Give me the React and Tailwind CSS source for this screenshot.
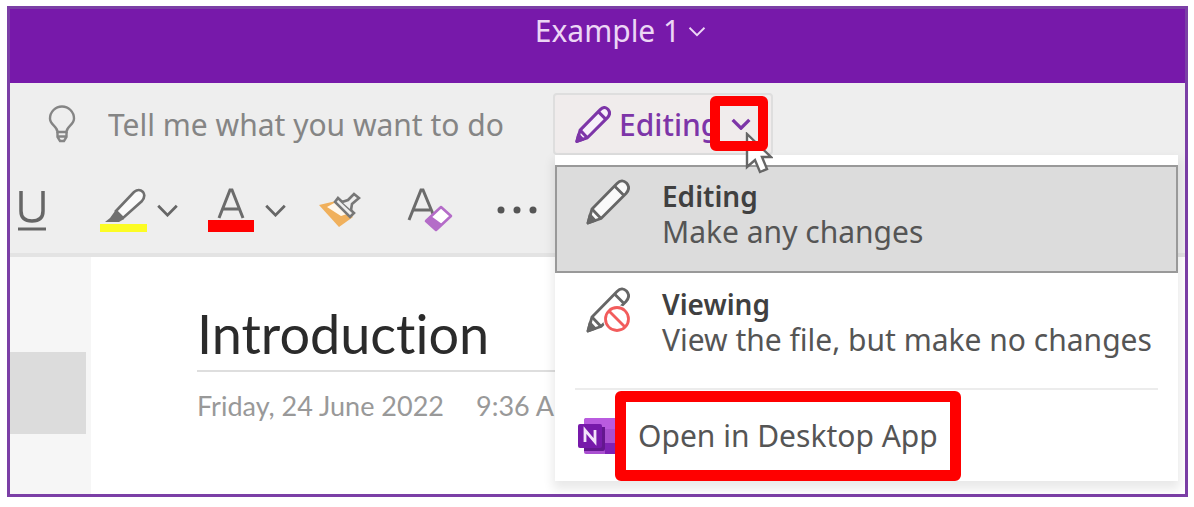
import React from 'react';

function Chevron({ className, strokeWidth = 3 }) {
  return (
    <svg viewBox="0 0 24 14" className={className} fill="none" stroke="currentColor" strokeWidth={strokeWidth} aria-hidden="true">
      <path d="M2 2l10 10L22 2" />
    </svg>
  );
}

function Pencil({ className, fill = 'none', strokeWidth = 2.8, children }) {
  return (
    <svg viewBox="0 0 44 46" className={className} fill="none" stroke="currentColor" strokeWidth={strokeWidth} strokeLinejoin="round" aria-hidden="true">
      <path d="M2 44L6 30L31 4.500Q36 -.5 40.500 4Q45 9 40 14.500L15 39.500Z" fill={fill} />
      <path d="M28.500 7L37.500 16M6 30L15 39.500" />
      <path d="M2 44L4 36L9 41.500Z" fill="currentColor" />
      {children}
    </svg>
  );
}

function Bulb() {
  return (
    <svg viewBox="0 0 28 38" className="h-[38px] w-7 shrink-0 text-[#858585]" fill="none" stroke="currentColor" strokeWidth="2.400" role="img" aria-label="Tell me">
      <path d="M9.500 27C9.500 21 2 20 2 13.500A12 12 0 0 1 26 13.500C26 20 18.500 21 18.500 27Z" />
      <path d="M9.500 27V32L12 36H16L18.500 32V27M9.500 31.500H18.500" />
    </svg>
  );
}

function Highlighter() {
  return (
    <svg viewBox="0 0 48 46" className="h-[46px] w-12" fill="none" aria-hidden="true">
      <path d="M16 24L34 5Q39 1 43 5Q46 9 42 14L23 31Z" fill="#fafafa" stroke="#707070" strokeWidth="2.600" />
      <path d="M5 35L10 31L15 24L24 32L19 35Z" fill="#707070" />
      <rect x="0" y="37" width="47" height="8" fill="#fcfc24" />
    </svg>
  );
}

function FontColor() {
  return (
    <svg viewBox="0 0 46 46" className="h-[46px] w-[46px]" fill="none" aria-hidden="true">
      <path d="M11 31L22 3H24L35 31M15 22H31" stroke="#6b6b6b" strokeWidth="3" />
      <rect x="0" y="33" width="46" height="12" fill="#ff0000" />
    </svg>
  );
}

function FormatPainter() {
  return (
    <svg viewBox="0 0 42 36" className="h-9 w-[42px]" fill="none" aria-hidden="true">
      <path d="M0 13L17 9L34 25L20 35Z" fill="#f0b05c" />
      <path d="M8 15L17 10L28 22L22 24Z" fill="#fff7ec" />
      <path d="M19 6L35 21L31 25L16 10Z" fill="#eeeeee" stroke="#777" strokeWidth="2.600" />
      <path d="M23 10L29 8L35 2L40 6L33 12L32 18" fill="#eeeeee" stroke="#777" strokeWidth="2.600" />
    </svg>
  );
}

function ClearFormat() {
  return (
    <svg viewBox="0 0 46 46" className="h-[46px] w-[46px]" fill="none" aria-hidden="true">
      <path d="M2 33L14 3H16L26 27M7 23H23" stroke="#6b6b6b" strokeWidth="3" />
      <path d="M19 34L34 20L44 29L29 43Z" fill="#fff" stroke="#b46cc8" strokeWidth="2.600" strokeLinejoin="round" />
      <path d="M19 34L24 29L35 37L29 43Z" fill="#b46cc8" />
    </svg>
  );
}

function OneNoteLogo() {
  return (
    <svg viewBox="0 0 46 40" className="h-10 w-[46px] shrink-0" aria-hidden="true">
      <rect x="7" y="2" width="36" height="36" rx="2" fill="#a94fd0" />
      <path d="M9 2H43V13H7V4Z" fill="#b95bdf" />
      <path d="M28 27H43V38H28Z" fill="#7f22b4" />
      <path d="M24 11H28V33Q28 35 26 35H7V31H24Z" fill="#64178f" />
      <rect x="1" y="8" width="24" height="24" rx="2" fill="#7719aa" />
      <path d="M8 26V14L18 26V14" fill="none" stroke="#f3e3fa" strokeWidth="2.800" />
    </svg>
  );
}

function Cursor() {
  return (
    <svg viewBox="0 0 28 42" className="pointer-events-none absolute top-[39px] left-[192px] z-20 h-[42px] w-7" aria-hidden="true">
      <path d="M2 2V35L10 28L15 40L22 37L17 25H26Z" fill="#fff" stroke="#666" strokeWidth="2.400" />
    </svg>
  );
}

function ModeItem({ title, detail, selected, icon }) {
  return (
    <button
      type="button"
      role="menuitem"
      className={
        selected
          ? 'flex h-[108px] w-full items-start border-2 border-[#999] bg-[#dcdcdc] pt-3 pl-[29px] text-left'
          : 'flex h-[108px] w-full items-start border-2 border-transparent pt-3 pl-[29px] text-left'
      }
    >
      {icon}
      <span className="ml-8 flex flex-col text-[30px] leading-[35px] whitespace-nowrap text-[#555]">
        <span className="text-[28px] font-semibold text-[#404040]">{title}</span>
        <span>{detail}</span>
      </span>
    </button>
  );
}

function ModeMenu() {
  return (
    <div role="menu" className="absolute top-full left-0.5 z-10 w-[623px] bg-white pt-2.5 shadow-[0_6px_10px_2px_rgba(0,0,0,0.09)]">
      <ModeItem
        selected
        title="Editing"
        detail="Make any changes"
        icon={<Pencil className="h-[46px] w-11 shrink-0 text-[#666]" fill="#fafafa" />}
      />
      <ModeItem
        title="Viewing"
        detail="View the file, but make no changes"
        icon={
          <Pencil className="h-[46px] w-11 shrink-0 text-[#666]" fill="#fff">
            <circle cx="31" cy="32" r="14" fill="#fff" stroke="none" />
            <circle cx="31" cy="32" r="11.500" fill="#fff" stroke="#f25c5c" strokeWidth="2.800" />
            <path d="M23 24L39 40" stroke="#f25c5c" strokeWidth="2.800" />
          </Pencil>
        }
      />
      <hr className="mx-5 mt-[7px] border-t-2 border-[#ececec]" />
      <button type="button" role="menuitem" className="flex h-[91px] items-center pl-[22px]">
        <OneNoteLogo />
        <span className="z-10 -ml-2 flex h-[90px] items-center rounded-md border-[11px] border-[#ff0000] bg-white px-3 text-[30px] whitespace-nowrap text-[#555]">
          Open in Desktop App
        </span>
      </button>
    </div>
  );
}

export default function App() {
  return (
    <div className="bg-white pt-1.5 pr-1.5 pb-[11px] pl-[7px] font-['Noto_Sans','Open_Sans',sans-serif]">
      <div className="border-[3px] border-[#7b3fa6]">
        <header className="flex h-[74px] items-start justify-center bg-[#7719aa] pt-1 pl-[46px] text-[#ecd6f5]">
          <button type="button" className="flex items-center gap-2 text-[30px] leading-9">
            Example 1
            <Chevron className="h-[11px] w-[18px]" strokeWidth={2.5} />
          </button>
        </header>

        <section className="border-b-4 border-[#e3e3e3] bg-[#eeeeee] pt-2.5">
          <div className="flex items-center">
            <label htmlFor="tell-me" className="flex w-[98px] shrink-0 items-center pl-[38px]">
              <Bulb />
            </label>
            <input
              id="tell-me"
              type="text"
              placeholder="Tell me what you want to do"
              className="w-[445px] bg-transparent text-[30px] placeholder:text-[#858585] placeholder:opacity-100 focus:outline-none"
            />
            <div className="relative">
              <button
                type="button"
                aria-haspopup="menu"
                aria-expanded="true"
                className="flex h-[62px] w-[220px] items-center rounded border-2 border-[#dedede] bg-[#f0ecec] pl-5 text-[30px] font-medium text-[#7d35a8]"
              >
                <Pencil className="h-[37px] w-9 shrink-0" strokeWidth={3.8} fill="#f7effa" />
                <span className="ml-2">Editing</span>
              </button>
              <ModeMenu />
              <Cursor />
              <span className="pointer-events-none absolute top-[3px] left-[157px] z-30 flex h-[55px] w-[58px] items-center justify-center rounded-md border-[10px] border-[#ff0000] pl-1">
                <Chevron className="h-3 w-5 text-[#7d35a8]" strokeWidth={4} />
              </span>
            </div>
          </div>

          <div className="flex h-[98px] items-center pt-3 pl-2 text-[#666]">
            <button type="button" aria-label="Underline" className="w-7">
              <svg viewBox="0 0 28 42" className="h-[42px] w-7" fill="none" stroke="#666" strokeWidth="3.500" aria-hidden="true">
                <path d="M3 2V22Q3 32 14 32Q25 32 25 22V2" />
                <path d="M0 40H28" strokeWidth="3" />
              </svg>
            </button>
            <button type="button" aria-label="Highlight" className="ml-[54px] flex items-center gap-2">
              <Highlighter />
              <Chevron className="h-[13px] w-[23px]" />
            </button>
            <button type="button" aria-label="Font color" className="ml-[29px] flex items-center gap-2.5">
              <FontColor />
              <Chevron className="h-[13px] w-[23px]" />
            </button>
            <button type="button" aria-label="Format painter" className="ml-8">
              <FormatPainter />
            </button>
            <button type="button" aria-label="Clear formatting" className="ml-[46px]">
              <ClearFormat />
            </button>
            <button type="button" aria-label="More options" className="ml-11">
              <svg viewBox="0 0 42 8" className="h-2 w-[42px]" fill="#555" aria-hidden="true">
                <circle cx="4" cy="4" r="3.500" />
                <circle cx="20" cy="4" r="3.500" />
                <circle cx="36" cy="4" r="3.500" />
              </svg>
            </button>
          </div>
        </section>

        <div className="flex">
          <aside className="w-[81px] shrink-0 bg-[#f6f6f6] pt-[95px]">
            <button type="button" aria-label="Page" className="block h-[82px] w-[76px] bg-[#dcdcdc]" />
          </aside>
          <main className="grow pt-[45px] pr-6 pb-[70px] pl-[106px] font-['Lato','Noto_Sans',sans-serif]">
            <h1 className="border-b-2 border-[#dedede] pb-1 text-[54px] leading-[64px] font-normal text-[#2b2b2b] [font-variant-ligatures:none]">Introduction</h1>
            <p className="flex gap-8 pt-4 text-[27px] leading-9 whitespace-nowrap text-[#999]">
              <span>Friday, 24 June 2022</span>
              <span>9:36 AM</span>
            </p>
          </main>
        </div>
      </div>
    </div>
  );
}
